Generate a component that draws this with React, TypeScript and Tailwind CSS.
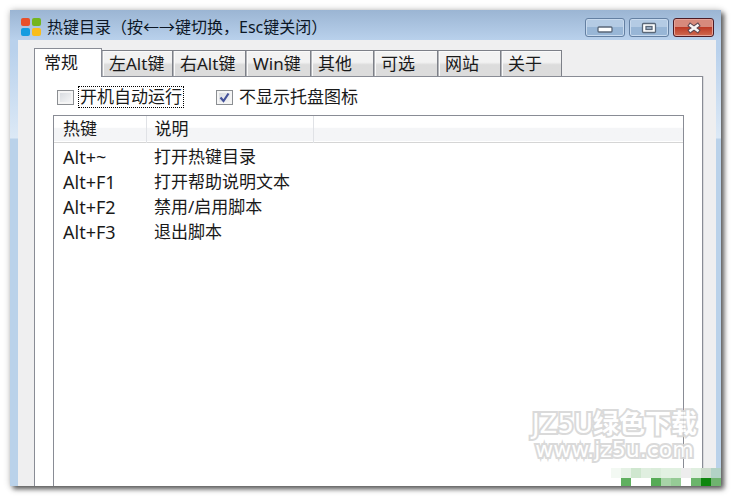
import React, { useState } from "react";

interface Hotkey {
    keys: string;
    desc: string;
}

const tabs = [
    { name: "左Alt键", width: "min-w-[71px]" },
    { name: "右Alt键", width: "min-w-[73px]" },
    { name: "Win键", width: "min-w-[65px]" },
    { name: "其他", width: "min-w-[63px]" },
    { name: "可选", width: "min-w-[64px]" },
    { name: "网站", width: "min-w-[63px]" },
    { name: "关于", width: "min-w-[61px]" },
];

const hotkeys: Hotkey[] = [
    { keys: "Alt+~", desc: "打开热键目录" },
    { keys: "Alt+F1", desc: "打开帮助说明文本" },
    { keys: "Alt+F2", desc: "禁用/启用脚本" },
    { keys: "Alt+F3", desc: "退出脚本" },
];

const mosaicTop = [
    "bg-[#f3f9f3]", "bg-[#e6f2e6]", "bg-[#cfe7cf]", "bg-[#e0efe0]", "bg-[#dbeddb]", "bg-[#e2f1e2]",
    "bg-[#e2f1e2]", "bg-[#ededed]", "bg-[#e0efe0]", "bg-[#cddccd]", "bg-[#b2d2c5]",
];
const mosaicBottom = [
    "bg-white", "bg-[#60b060]", "bg-white", "bg-white", "bg-[#57ab57]", "bg-[#a8d4a8]",
    "bg-[#96cb96]", "bg-white", "bg-[#6bb56b]", "bg-[#0f860f]", "bg-[#6fb36f]",
];

const Logo: React.FC = () => (
    <svg width="22" height="20" viewBox="0 0 22 20" aria-hidden="true">
        <rect x="1" y="1" width="9" height="8" rx="2" fill="#e8502a" />
        <rect x="12" y="1" width="9" height="8" rx="2" fill="#74b51d" />
        <rect x="1" y="11" width="9" height="8" rx="2" fill="#139ce0" />
        <rect x="12" y="11" width="9" height="8" rx="2" fill="#f8bd1c" />
    </svg>
);

const windowButton =
    "flex h-[19px] w-10 items-center justify-center rounded-[3px] border border-[#6480a2] bg-linear-to-b from-[#b4cbe4] from-50% to-[#98b6d6] to-50% shadow-[inset_0_0_0_1px_#c8daee]";

const TitleBar: React.FC = () => (
    <header className="flex h-[30px] shrink-0 items-start bg-linear-to-b from-[#9bb5d3] to-[#b9d1ec] pl-[10px] pr-[7px]">
        <div className="mt-[7px]">
            <Logo />
        </div>
        <h1 className="ml-[5px] mt-[7px] whitespace-nowrap text-[16px] leading-5 text-[#0c1726]">
            热键目录（按←→键切换，Esc键关闭）
        </h1>
        <div className="ml-auto mt-2 flex gap-1">
            <button aria-label="最小化" className={windowButton}>
                <svg width="16" height="12" viewBox="0 0 16 12">
                    <rect x="1" y="5" width="14" height="5" rx="1" fill="#fff" stroke="#596778" strokeWidth="1.3" />
                </svg>
            </button>
            <button aria-label="最大化" className={windowButton}>
                <svg width="16" height="12" viewBox="0 0 16 12">
                    <rect x="1.5" y="1.5" width="13" height="9" rx="1" fill="#fff" stroke="#596778" strokeWidth="1.3" />
                    <rect x="5" y="4.5" width="6" height="3" fill="#a4b7cd" stroke="#596778" strokeWidth="1.3" />
                </svg>
            </button>
            <button
                aria-label="关闭"
                className="flex h-[19px] w-[41px] items-center justify-center rounded-[3px] border border-[#4c1c25] bg-linear-to-b from-[#d78a7c] from-45% via-[#bd3b26] via-50% to-[#cf6a50] shadow-[inset_0_0_0_1px_#e5a398]"
            >
                <svg width="16" height="12" viewBox="0 0 16 12" strokeLinecap="square">
                    <path d="M4.5 3.5 L11.5 8.5 M11.5 3.5 L4.5 8.5" stroke="#5c4650" strokeWidth="4.6" />
                    <path d="M4.5 3.5 L11.5 8.5 M11.5 3.5 L4.5 8.5" stroke="#f7f4f4" strokeWidth="2.6" />
                </svg>
            </button>
        </div>
    </header>
);

const checkboxClass =
    "col-start-1 row-start-1 h-[15px] w-[17px] appearance-none border border-[#8b8e92] bg-linear-to-br from-[#d3d7dc] to-[#fafafa] shadow-[inset_0_0_0_2px_#f5f5f5]";

const App: React.FC = () => {
    const [active, setActive] = useState("常规");
    const [autoRun, setAutoRun] = useState(false);
    const [hideTray, setHideTray] = useState(true);

    return (
        <div className="flex h-screen min-h-80 flex-col bg-white pb-[11px] pl-[10px] pr-3 pt-[10px] font-['Noto_Sans','Noto_Sans_CJK_SC',sans-serif] text-[17px] text-[#1a1a1a]">
            <div className="relative flex min-h-0 flex-1 flex-col bg-linear-to-b from-[#b9d1ec] from-[40px] via-[#dce9f6] via-[128px] to-[#bad2ea] to-[129px] shadow-[3px_3px_5px_#333333cc,0_0_7px_#00000033]">
                <TitleBar />

                <main className="ml-2 mr-[5px] flex min-h-0 flex-1 flex-col bg-[#efeff0] pl-4 pr-[13px] pt-2">
                    {/* Tabs */}
                    <div role="tablist" className="relative z-10 flex items-end whitespace-nowrap leading-6">
                        <button
                            role="tab"
                            aria-selected={active === "常规"}
                            onClick={() => setActive("常规")}
                            className="-mb-px h-[29px] w-[68px] border border-b-0 border-[#898c95] bg-white pl-[9px] text-left"
                        >
                            常规
                        </button>
                        {tabs.map((tab) => (
                            <button
                                key={tab.name}
                                role="tab"
                                aria-selected={active === tab.name}
                                onClick={() => setActive(tab.name)}
                                className={`${tab.width} h-[26px] border border-b-0 border-l-0 border-[#7d8088] bg-linear-to-b from-[#f2f2f2] from-45% to-[#dcdcdc] to-55% pl-[7px] text-left shadow-[inset_1px_0_0_#b4b6ba,inset_2px_1px_0_#fafafa]`}
                            >
                                {tab.name}
                            </button>
                        ))}
                    </div>

                    {/* Panel */}
                    <section className="flex min-h-0 flex-1 flex-col border border-b-0 border-[#898c95] bg-white pl-[18px] pr-[18px] shadow-[1px_0_0_#d8d9dc]">
                        <div className="flex h-[38px] items-center whitespace-nowrap pl-[4px] pt-[2px] leading-5">
                            <div className="flex items-center gap-1">
                                <input
                                    id="autorun"
                                    type="checkbox"
                                    checked={autoRun}
                                    onChange={(e) => setAutoRun(e.target.checked)}
                                    className={`${checkboxClass} checked:bg-[#4b5c9c]`}
                                />
                                <label htmlFor="autorun" className="border border-dotted border-black px-px">
                                    开机自动运行
                                </label>
                            </div>
                            <div className="ml-8 flex items-center gap-[6px]">
                                <span className="grid">
                                    <input
                                        id="tray"
                                        type="checkbox"
                                        checked={hideTray}
                                        onChange={(e) => setHideTray(e.target.checked)}
                                        className={checkboxClass}
                                    />
                                    {hideTray && (
                                        <svg
                                            className="pointer-events-none col-start-1 row-start-1"
                                            width="17"
                                            height="15"
                                            viewBox="0 0 17 15"
                                        >
                                            <path d="M4.5 7.5 L7.5 11 L12.5 3.5" fill="none" stroke="#44519a" strokeWidth="2.2" />
                                        </svg>
                                    )}
                                </span>
                                <label htmlFor="tray">不显示托盘图标</label>
                            </div>
                        </div>

                        {/* Hotkey list */}
                        <div className="min-h-0 flex-1 overflow-hidden border border-b-0 border-[#898c95] bg-white">
                            <table className="w-full table-fixed border-collapse text-left">
                                <thead>
                                    <tr className="h-[26px] border-b border-[#d5d5d5] bg-linear-to-b from-white from-45% to-[#f4f5f7] to-50% leading-6">
                                        <th className="w-[92px] border-r border-[#e0e2e6] pl-[9px] font-normal">热键</th>
                                        <th className="w-[167px] border-r border-[#e0e2e6] pl-2 font-normal">说明</th>
                                        <th aria-hidden="true"></th>
                                    </tr>
                                </thead>
                                <tbody>
                                    <tr className="h-[2px]"></tr>
                                    {hotkeys.map((item) => (
                                        <tr key={item.keys} className="h-[25px] whitespace-nowrap leading-6">
                                            <td className="pl-[9px] text-lg leading-6">{item.keys}</td>
                                            <td className="pl-2">{item.desc}</td>
                                            <td></td>
                                        </tr>
                                    ))}
                                </tbody>
                            </table>
                        </div>
                    </section>
                </main>

                {/* Watermark */}
                <div className="pointer-events-none absolute bottom-6 right-6 z-20 whitespace-nowrap text-center font-['DejaVu_Sans','Noto_Sans_CJK_SC',sans-serif] text-white opacity-90 [-webkit-text-stroke:4px_#d6d6d6] [paint-order:stroke_fill]">
                    <p className="text-[26px] leading-7">
                        JZ5U<span className="font-bold">绿色下载</span>
                    </p>
                    <p className="text-[22px] leading-6">www.jz5u.com</p>
                </div>
                <div className="absolute bottom-0 right-0 z-20" aria-hidden="true">
                    <div className="flex">
                        {mosaicTop.map((color, i) => (
                            <span key={i} className={`h-[10px] w-[10px] ${color}`} />
                        ))}
                    </div>
                    <div className="flex">
                        {mosaicBottom.map((color, i) => (
                            <span key={i} className={`h-2 w-[10px] ${color}`} />
                        ))}
                    </div>
                </div>
            </div>
        </div>
    );
};

export default App;
